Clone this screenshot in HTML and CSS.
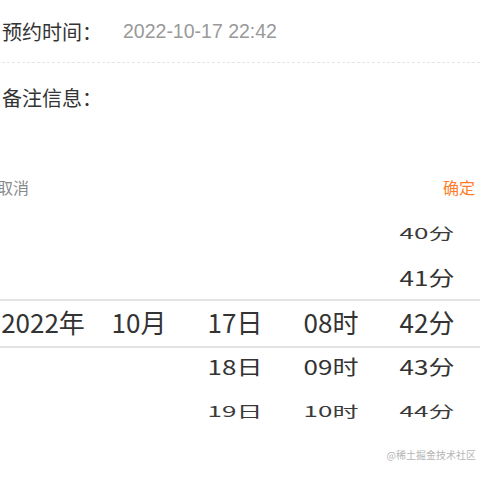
FILE: index.html
```html
<!DOCTYPE html>
<html lang="zh-CN">
<head>
<meta charset="utf-8">
<title>预约时间</title>
<link rel="stylesheet" href="styles.css">
</head>
<body>
<div class="page">
  <div class="form">
    <div class="row row-first">
      <span class="label">预约时间：</span>
      <span class="value">2022-10-17 22:42</span>
    </div>
    <div class="row row-second">
      <span class="label">备注信息：</span>
    </div>
  </div>

  <div class="toolbar">
    <span class="btn cancel">取消</span>
    <span class="btn confirm">确定</span>
  </div>

  <div class="picker">
    <div class="col">
      <div class="item"></div>
      <div class="item"></div>
      <div class="item cur">2022年</div>
      <div class="item"></div>
      <div class="item"></div>
    </div>
    <div class="col">
      <div class="item"></div>
      <div class="item"></div>
      <div class="item cur">10月</div>
      <div class="item"></div>
      <div class="item"></div>
    </div>
    <div class="col">
      <div class="item"></div>
      <div class="item"></div>
      <div class="item cur">17日</div>
      <div class="item near">18日</div>
      <div class="item far">19日</div>
    </div>
    <div class="col">
      <div class="item"></div>
      <div class="item"></div>
      <div class="item cur">08时</div>
      <div class="item near">09时</div>
      <div class="item far">10时</div>
    </div>
    <div class="col">
      <div class="item far">40分</div>
      <div class="item near">41分</div>
      <div class="item cur">42分</div>
      <div class="item near">43分</div>
      <div class="item far">44分</div>
    </div>
    <div class="indicator"></div>
  </div>

  <div class="footer">@稀土掘金技术社区</div>
</div>
</body>
</html>
```

FILE: styles.css
```css
html, body {
  margin: 0;
  padding: 0;
  background: #ffffff;
}

body {
  width: 480px;
  height: 480px;
  overflow: hidden;
  font-family: "Liberation Sans", "Noto Sans CJK SC", sans-serif;
  color: #333333;
}

.page {
  display: flex;
  flex-direction: column;
}

.form {
  display: flex;
  flex-direction: column;
  padding-left: 2px;
}

.row {
  display: flex;
  align-items: center;
}

.row-first {
  height: 62px;
  border-bottom: 1px dashed #e6e6e6;
}

.row-second {
  height: 68px;
}

.label {
  color: #333333;
  font-size: 20px;
  width: 121px;
  flex: none;
}

.value {
  color: #999999;
  font-size: 19.5px;
}

.toolbar {
  display: flex;
  justify-content: space-between;
  align-items: center;
  height: 44px;
  margin-top: 34px;
  margin-left: -3px;
  padding-right: 5px;
  font-family: "Noto Sans CJK SC", sans-serif;
  font-size: 16px;
}

.cancel {
  color: #888888;
}

.confirm {
  color: #ff7d2a;
}

.picker {
  position: relative;
  display: grid;
  grid-template-columns: repeat(5, 96px);
  margin-left: -5px;
  padding-top: 1px;
  font-family: "Noto Sans CJK SC", sans-serif;
  font-size: 26px;
  color: #333333;
}

.col {
  display: flex;
  flex-direction: column;
}

.item {
  height: 44.5px;
  display: flex;
  align-items: center;
  justify-content: center;
  white-space: nowrap;
}

.near {
  transform: scaleY(0.78);
}

.far {
  transform: scaleY(0.58);
  color: #3a3a3a;
}

.indicator {
  position: absolute;
  left: 0;
  right: 0;
  top: 90px;
  height: 45px;
  border-top: 2px solid #e3e3e3;
  border-bottom: 2px solid #e3e3e3;
  pointer-events: none;
}

.footer {
  margin-top: 14px;
  padding-right: 4px;
  text-align: right;
  font-family: "Noto Sans CJK SC", serif;
  font-size: 10px;
  color: #b5b5b5;
}
```
